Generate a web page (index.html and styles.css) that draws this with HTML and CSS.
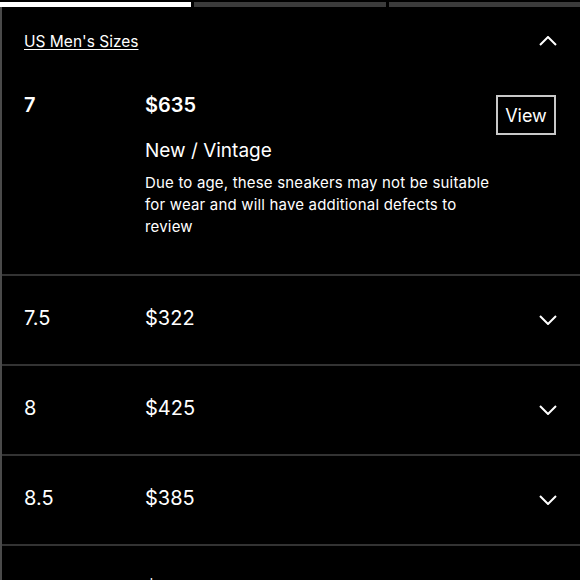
FILE: index.html
```html
<!DOCTYPE html>
<html lang="en">
<head>
  <meta charset="UTF-8">
  <title>Sizes</title>
  <link rel="stylesheet" href="styles.css">
</head>
<body>

<div class="tabs">
  <div class="tab active"></div>
  <div class="tab"></div>
  <div class="tab"></div>
</div>

<div class="list">
  <div class="list-head">
    <a href="#" class="size-link">US Men's Sizes</a>
    <svg class="chev" width="18" height="10" viewBox="0 0 18 10"><path d="M1 9 L9 1 L17 9" fill="none" stroke="#fff" stroke-width="2"/></svg>
  </div>

  <div class="row open">
    <div class="size bold">7</div>
    <div class="info">
      <div class="price bold">$635</div>
      <div class="cond">New / Vintage</div>
      <p class="desc">Due to age, these sneakers may not be suitable for wear and will have additional defects to review</p>
    </div>
    <button class="view-btn">View</button>
  </div>

  <div class="row">
    <div class="size">7.5</div>
    <div class="price">$322</div>
    <svg class="chev" width="18" height="10" viewBox="0 0 18 10"><path d="M1 1 L9 9 L17 1" fill="none" stroke="#fff" stroke-width="2"/></svg>
  </div>
  <div class="row">
    <div class="size">8</div>
    <div class="price">$425</div>
    <svg class="chev" width="18" height="10" viewBox="0 0 18 10"><path d="M1 1 L9 9 L17 1" fill="none" stroke="#fff" stroke-width="2"/></svg>
  </div>
  <div class="row">
    <div class="size">8.5</div>
    <div class="price">$385</div>
    <svg class="chev" width="18" height="10" viewBox="0 0 18 10"><path d="M1 1 L9 9 L17 1" fill="none" stroke="#fff" stroke-width="2"/></svg>
  </div>
  <div class="row">
    <div class="size">9</div>
    <div class="price">$445</div>
    <svg class="chev" width="18" height="10" viewBox="0 0 18 10"><path d="M1 1 L9 9 L17 1" fill="none" stroke="#fff" stroke-width="2"/></svg>
  </div>
</div>

</body>
</html>
```

FILE: styles.css
```css
body {
  margin: 0;
  background: #000;
  color: #fff;
  font-family: Inter, "Liberation Sans", Arial, sans-serif;
  overflow: hidden;
}

.tabs {
  display: flex;
  gap: 3px;
  padding-top: 2px;
}

.tab {
  flex: 1;
  height: 5px;
  background: #3b3b3b;
}

.tab.active {
  background: #fff;
}

.list {
  border-left: 2px solid #4a4a4a;
}

.list-head {
  display: flex;
  justify-content: space-between;
  align-items: center;
  height: 68px;
  padding: 0 24px 0 22px;
}

.size-link {
  color: #fff;
  font-size: 15.5px;
  text-decoration: underline;
  text-underline-offset: 2px;
}

.row {
  display: flex;
  align-items: center;
  height: 88px;
  padding: 0 24px 0 22px;
  border-bottom: 2px solid #333;
  font-size: 20px;
}

.row .size,
.row > .price {
  margin-bottom: 5px;
}

.row.open {
  align-items: flex-start;
  height: auto;
  padding-top: 18px;
  padding-bottom: 36px;
}

.row.open .size {
  margin-bottom: 0;
}

.size {
  width: 121px;
}

.bold {
  font-weight: 600;
}

.info {
  flex: 1;
}

.price {
  flex: 1;
}

.cond {
  margin-top: 22px;
  font-size: 19px;
}

.desc {
  margin: 10px 0 0;
  font-size: 15px;
  line-height: 22px;
  letter-spacing: 0.18px;
  width: 350px;
}

.view-btn {
  margin-top: 2px;
  width: 60px;
  height: 40px;
  background: #000;
  color: #fff;
  border: 2px solid #c8c8c8;
  font-family: inherit;
  font-size: 18px;
  padding: 0;
}

.chev {
  margin-right: -1px;
}
```
